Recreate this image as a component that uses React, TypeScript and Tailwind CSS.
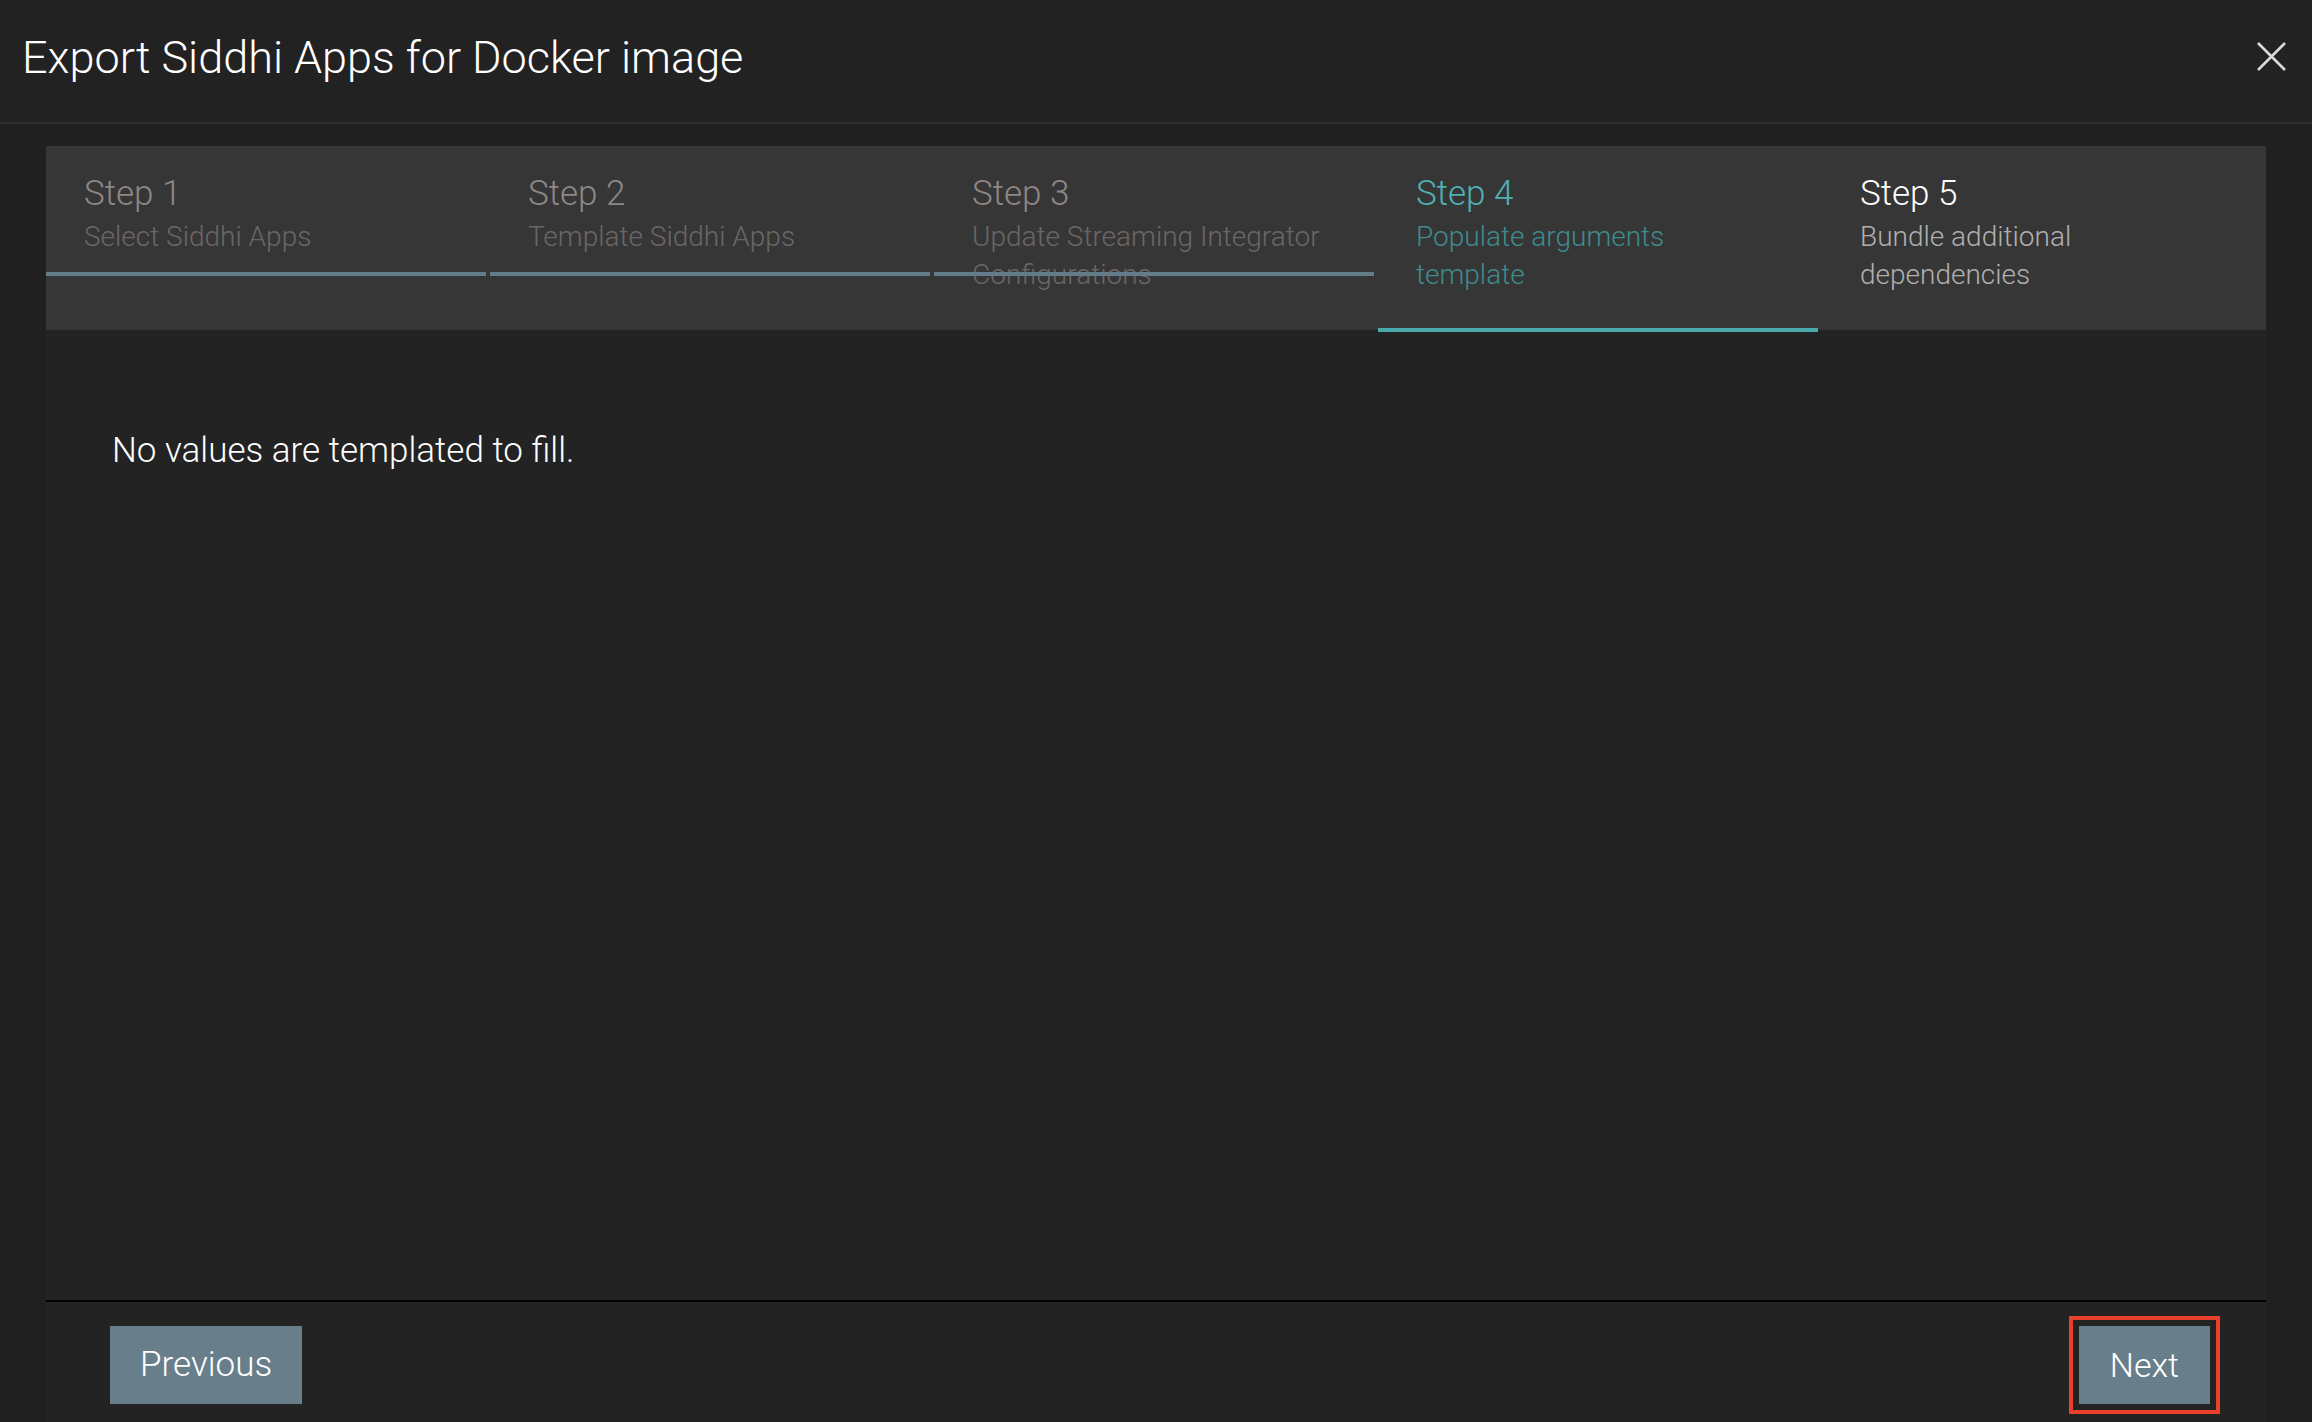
import React from 'react'

type Step = {
  label: string
  sub: string
  state: 'done' | 'active' | 'todo'
}

const steps: Step[] = [
  { label: 'Step 1', sub: 'Select Siddhi Apps', state: 'done' },
  { label: 'Step 2', sub: 'Template Siddhi Apps', state: 'done' },
  { label: 'Step 3', sub: 'Update Streaming Integrator Configurations', state: 'done' },
  { label: 'Step 4', sub: 'Populate arguments template', state: 'active' },
  { label: 'Step 5', sub: 'Bundle additional dependencies', state: 'todo' },
]

const StepItem = ({ step }: { step: Step }) => {
  const labelColor =
    step.state === 'active' ? 'text-[#4fb1b3]' : step.state === 'todo' ? 'text-white' : 'text-[#8f8784]'
  const subColor =
    step.state === 'active' ? 'text-[#3f8b8d]' : step.state === 'todo' ? 'text-[#b0b0b0]' : 'text-[#6b6665]'
  return (
    <div className="relative h-full pl-[38px] pr-[56px] pt-[28px] font-light">
      <div className={`text-[35px] leading-[40px] ${labelColor}`}>{step.label}</div>
      <div className={`mt-[4px] text-[28px] leading-[38px] ${subColor}`}>{step.sub}</div>
      {step.state === 'done' && (
        <div className="absolute left-0 right-[4px] top-[126px] h-[4px] bg-[#637c89]" />
      )}
      {step.state === 'active' && (
        <div className="absolute left-0 right-[4px] top-[182px] h-[4px] bg-[#4aa9ab]" />
      )}
    </div>
  )
}

export default function App() {
  return (
    <div
      className="w-[2312px] h-[1422px] overflow-hidden bg-[#202020] flex flex-col"
      style={{ fontFamily: 'Roboto, "Liberation Sans", sans-serif' }}
    >
      <div className="h-[124px] shrink-0 border-b-2 border-[#2d2d2d] bg-[#222222] flex items-center justify-between pl-[22px] pr-[26px]">
        <h1 className="text-[45px] leading-[52px] text-white font-light pb-[6px]">
          Export Siddhi Apps for Docker image
        </h1>
        <button className="w-[29px] h-[29px] mb-[10px]">
          <svg viewBox="0 0 29 29" className="w-[29px] h-[29px]">
            <path d="M1 1 L28 28 M28 1 L1 28" stroke="#dadada" strokeWidth="2.6" fill="none" />
          </svg>
        </button>
      </div>

      <div className="flex-1 px-[46px] pt-[22px] flex flex-col">
        <div className="flex-1 bg-[#232323] flex flex-col">
          <div className="h-[184px] shrink-0 bg-[#363636] grid grid-cols-5">
            {steps.map((s) => (
              <StepItem key={s.label} step={s} />
            ))}
          </div>

          <div className="h-[972px] shrink-0 border-b-2 border-black pl-[66px] pt-[101px]">
            <p className="text-[35px] leading-[40px] text-white font-light">No values are templated to fill.</p>
          </div>

          <div className="flex items-start justify-between pt-[24px] pl-[64px] pr-[56px]">
            <button className="h-[78px] px-[30px] bg-[#687e8a] text-white text-[35px] font-light">Previous</button>
            <button className="h-[78px] px-[31px] bg-[#687e8a] text-white text-[34px] font-light outline-4 outline-[#e8402a] outline-offset-[6px]">
              Next
            </button>
          </div>
        </div>
      </div>
    </div>
  )
}
